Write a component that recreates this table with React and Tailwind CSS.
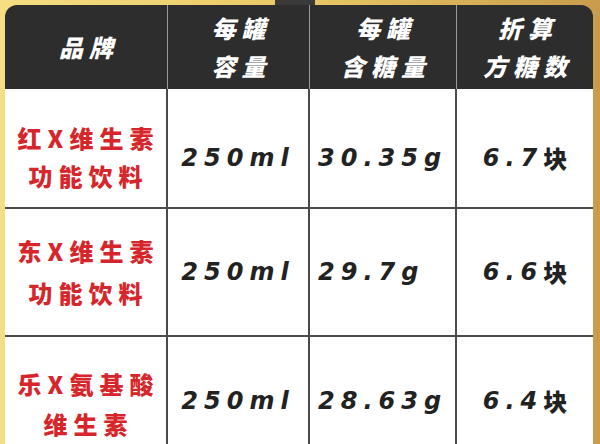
import React from 'react'

const cols = 'grid grid-cols-[163px_142px_147px_136px]'

const rows = [
    { brand: ['红X维生素', '功能饮料'], vol: '250ml', sugar: '30.35g', cubes: '6.7', h: 'h-[118px]', pt: 'pt-[20px]', bcls: 'justify-center pt-[18px]', lead: 'leading-[38px]' },
    { brand: ['东X维生素', '功能饮料'], vol: '250ml', sugar: '29.7g', cubes: '6.6', h: 'h-[128px]', pt: 'pt-0', bcls: 'justify-center', lead: 'leading-[42px]' },
    { brand: ['乐X氨基酸', '维生素', '功能饮料'], vol: '250ml', sugar: '28.63g', cubes: '6.4', h: 'h-[150px]', pt: 'pb-[20px]', bcls: 'justify-start pt-[27px]', lead: 'leading-[40px]' },
]

function HeadCell({ lines, last }) {
    return (
        <div className={`flex flex-col items-center justify-center ${last ? '' : 'border-r border-[#9a9a9a]'}`}>
            {lines.map((l) => (
                <div key={l} className="text-[24px] leading-[38px] font-black italic text-white tracking-[6px] pl-[6px]">
                    {l}
                </div>
            ))}
        </div>
    )
}

function NumCell({ children, last, align = 'justify-center', pt }) {
    return (
        <div className={`flex items-center ${align} ${pt} ${last ? '' : 'border-r-2 border-[#4a4a4a]'}`}>
            <span className="font-['DejaVu_Sans',sans-serif] text-[24px] font-bold italic text-[#222] tracking-[6px]">
                {children}
            </span>
        </div>
    )
}

export default function App() {
    return (
        <div className="w-[600px] h-[444px] overflow-hidden bg-gradient-to-r from-[#f6de82] via-[#e9c865] to-[#c89c4c] pt-[5px] pl-[5px] font-['Noto_Sans_CJK_SC','Noto_Sans',sans-serif]">
            <div className="relative w-[588px]">
                <div className="absolute -top-[5px] left-[270px] w-[40px] h-[5px] bg-[#3a3a3a]"></div>
                <div className={`${cols} h-[84px] bg-[#2e2d2d] rounded-t-[12px]`}>
                    <HeadCell lines={['品牌']} />
                    <HeadCell lines={['每罐', '容量']} />
                    <HeadCell lines={['每罐', '含糖量']} />
                    <HeadCell lines={['折算', '方糖数']} last />
                </div>
                <div className="bg-white">
                    {rows.map((r, i) => (
                        <div key={i} className={`${cols} ${r.h} border-t-2 border-[#4a4a4a] first:border-t-0`}>
                            <div className={`flex flex-col items-center overflow-hidden ${r.bcls} border-r-2 border-[#4a4a4a]`}>
                                {r.brand.map((b) => (
                                    <div key={b} className={`text-[24px] ${r.lead} font-black text-[#d7262b] tracking-[6px] pl-[6px]`}>
                                        {b}
                                    </div>
                                ))}
                            </div>
                            <NumCell pt={r.pt}>{r.vol}</NumCell>
                            <NumCell pt={r.pt} align="justify-start pl-[8px]">{r.sugar}</NumCell>
                            <div className={`flex items-center justify-center ${r.pt}`}>
                                <span className="font-['DejaVu_Sans',sans-serif] text-[24px] font-bold italic text-[#222] tracking-[6px]">
                                    {r.cubes}
                                </span>
                                <span className="text-[24px] font-black text-[#222]">块</span>
                            </div>
                        </div>
                    ))}
                </div>
            </div>
        </div>
    )
}
